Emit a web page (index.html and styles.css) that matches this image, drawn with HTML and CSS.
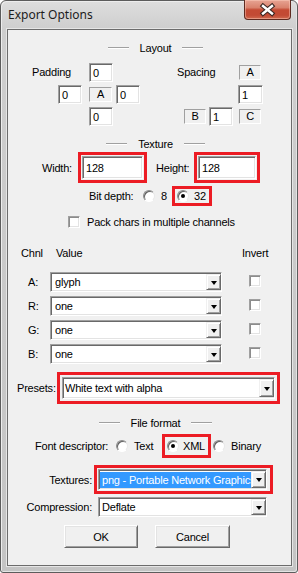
FILE: index.html
```html
<!DOCTYPE html>
<html lang="en">
<head>
    <meta charset="UTF-8">
    <meta name="viewport" content="width=device-width, initial-scale=1.0">
    <title>Export Options</title>
    <link rel="stylesheet" href="styles.css">
</head>
<body>
    <div class="window">
        <div class="titlebar">
            <span class="title">Export Options</span>
            <div class="close-btn">
                <svg width="45" height="18" viewBox="0 0 45 18">
                    <path d="M18 5 L27 12.5 M18 12.5 L27 5" stroke="#3a2622" stroke-width="4.6" stroke-linecap="square" fill="none"/>
                    <path d="M18 5 L27 12.5 M18 12.5 L27 5" stroke="#ffffff" stroke-width="2.4" stroke-linecap="square" fill="none"/>
                </svg>
            </div>
        </div>

        <div class="client">
            <!-- Layout -->
            <div class="group-head head-layout"><span class="rule"></span><span>Layout</span><span class="rule"></span></div>

            <div class="box-rows">
                <div class="box-row row-a">
                    <span class="lbl-padding">Padding</span>
                    <div class="edit">0</div>
                    <span class="lbl-spacing">Spacing</span>
                    <span class="static">A</span>
                </div>
                <div class="box-row row-b">
                    <div class="edit">0</div>
                    <span class="static static-mid">A</span>
                    <div class="edit edit-right">0</div>
                    <div class="edit edit-wide">1</div>
                </div>
                <div class="box-row row-c">
                    <div class="edit">0</div>
                    <span class="static static-b">B</span>
                    <div class="edit edit-b">1</div>
                    <span class="static static-c">C</span>
                </div>
            </div>

            <!-- Texture -->
            <div class="group-head head-texture"><span class="rule"></span><span>Texture</span><span class="rule"></span></div>

            <div class="size-row">
                <span class="lbl-width">Width:</span>
                <div class="mark mark-width"><div class="edit edit-size">128</div></div>
                <span class="lbl-height">Height:</span>
                <div class="mark mark-height"><div class="edit edit-size">128</div></div>
            </div>

            <div class="bit-row">
                <span class="lbl-bit">Bit depth:</span>
                <span class="radio"></span>
                <span class="opt-8">8</span>
                <div class="mark mark-32">
                    <span class="radio checked"></span>
                    <span class="opt-32">32</span>
                </div>
            </div>

            <div class="pack-row">
                <span class="check"></span>
                <span>Pack chars in multiple channels</span>
            </div>

            <!-- Channels -->
            <div class="chnl-head">
                <span class="col-chnl">Chnl</span>
                <span class="col-value">Value</span>
                <span>Invert</span>
            </div>

            <div class="chnl-rows">
                <div class="chnl-row">
                    <span class="chnl-lbl">A:</span>
                    <div class="combo combo-chnl"><span class="combo-text">glyph</span><span class="drop"><i class="arrow"></i></span></div>
                    <span class="check check-invert"></span>
                </div>
                <div class="chnl-row">
                    <span class="chnl-lbl">R:</span>
                    <div class="combo combo-chnl"><span class="combo-text">one</span><span class="drop"><i class="arrow"></i></span></div>
                    <span class="check check-invert"></span>
                </div>
                <div class="chnl-row">
                    <span class="chnl-lbl">G:</span>
                    <div class="combo combo-chnl"><span class="combo-text">one</span><span class="drop"><i class="arrow"></i></span></div>
                    <span class="check check-invert"></span>
                </div>
                <div class="chnl-row">
                    <span class="chnl-lbl">B:</span>
                    <div class="combo combo-chnl"><span class="combo-text">one</span><span class="drop"><i class="arrow"></i></span></div>
                    <span class="check check-invert"></span>
                </div>
            </div>

            <div class="presets-row">
                <span class="lbl-presets">Presets:</span>
                <div class="mark mark-presets">
                    <div class="combo combo-presets"><span class="combo-text">White text with alpha</span><span class="drop"><i class="arrow"></i></span></div>
                </div>
            </div>

            <!-- File format -->
            <div class="group-head head-format"><span class="rule"></span><span>File format</span><span class="rule"></span></div>

            <div class="desc-row">
                <span class="lbl-desc">Font descriptor:</span>
                <span class="radio"></span>
                <span class="opt-text">Text</span>
                <div class="mark mark-xml">
                    <span class="radio checked"></span>
                    <span class="opt-xml">XML</span>
                </div>
                <span class="radio radio-binary"></span>
                <span class="opt-binary">Binary</span>
            </div>

            <div class="tex-row">
                <span class="lbl-right">Textures:</span>
                <div class="mark mark-tex">
                    <div class="combo combo-file"><span class="combo-text"><span class="selected">png - Portable Network Graphics</span></span><span class="drop"><i class="arrow"></i></span></div>
                </div>
            </div>

            <div class="comp-row">
                <span class="lbl-right">Compression:</span>
                <div class="combo combo-file combo-comp"><span class="combo-text">Deflate</span><span class="drop"><i class="arrow"></i></span></div>
            </div>

            <div class="button-row">
                <div class="btn btn-ok">OK</div>
                <div class="btn btn-cancel">Cancel</div>
            </div>
        </div>
    </div>
</body>
</html>
```

FILE: styles.css
```css
body {
    margin: 0;
    background: #ffffff;
    font-family: "Liberation Sans", Arial, sans-serif;
    font-size: 11px;
    letter-spacing: -0.2px;
    color: #000;
}

.window {
    box-sizing: border-box;
    width: 298px;
    height: 573px;
    padding: 0 5px 6px 6px;
    border: 1px solid #5c5c5c;
    border-radius: 6px 6px 3px 3px;
    background: linear-gradient(to bottom, #dedede 0, #cecece 28px, #c4c4c4 100%);
    box-shadow: inset 1px 1px 0 #ededed, inset -1px -1px 0 #e4e4e4;
    display: flex;
    flex-direction: column;
}

.titlebar {
    height: 28px;
    display: flex;
    justify-content: space-between;
    align-items: flex-start;
}

.title {
    font-family: "Noto Sans", "Open Sans", sans-serif;
    font-size: 12px;
    letter-spacing: 0;
    color: #1c1c1c;
    margin: 5px 0 0 1px;
}

.close-btn {
    box-sizing: border-box;
    width: 47px;
    height: 20px;
    margin: -1px 1px 0 0;
    border: 1px solid #5e2a20;
    border-top: none;
    border-radius: 0 0 4px 4px;
    background: linear-gradient(to bottom, #e7a493 0, #d9826d 40%, #c44a33 52%, #c24a34 80%, #d06a4f 100%);
    box-shadow: inset 0 0 0 1px rgba(255, 210, 195, 0.45);
    display: flex;
    align-items: center;
    justify-content: center;
}

.client {
    flex: 1;
    background: #f0f0f0;
    border: 1px solid #6c6c6c;
    box-shadow: 0 0 0 1px #e6e6e6;
    display: flex;
    flex-direction: column;
}

/* group headers */
.group-head {
    height: 14px;
    padding-left: 12px;
    display: flex;
    justify-content: center;
    align-items: center;
}

.rule {
    width: 21px;
    height: 0;
    border-top: 1px solid #a0a0a0;
    border-bottom: 1px solid #ffffff;
}

.group-head .rule:first-child {
    margin-right: 11px;
}

.group-head .rule:last-child {
    margin-left: 11px;
}

.head-layout {
    margin-top: 11px;
}

.head-texture {
    margin-top: 11px;
}

.head-format {
    margin-top: 12px;
}

/* sunken edit box */
.edit {
    box-sizing: border-box;
    width: 24px;
    height: 19px;
    padding: 2px 0 0 3px;
    background: #fff;
    border: 1px solid;
    border-color: #a0a0a0 #ffffff #ffffff #a0a0a0;
    box-shadow: inset 1px 1px 0 #696969, inset -1px -1px 0 #e3e3e3;
    line-height: 14px;
}

.static {
    box-sizing: border-box;
    width: 22px;
    height: 15px;
    border: 1px solid;
    border-color: #a0a0a0 #ffffff #ffffff #a0a0a0;
    text-align: center;
    line-height: 13px;
}

/* layout boxes */
.box-rows {
    margin-top: 8px;
    display: flex;
    flex-direction: column;
    gap: 3px;
}

.box-row {
    height: 19px;
    display: flex;
    align-items: center;
}

.row-a {
    padding-left: 24px;
}

.row-b {
    padding-left: 50px;
}

.row-c {
    padding-left: 81px;
}

.lbl-padding {
    width: 57px;
    margin-top: -2px;
}

.lbl-spacing {
    width: 62px;
    margin-left: 64px;
    margin-top: -2px;
}

.static-mid {
    width: 23px;
    margin-left: 7px;
}

.edit-right {
    margin-left: 4px;
}

.edit-wide {
    width: 25px;
    margin-left: 98px;
}

.static-b {
    margin-left: 71px;
}

.edit-b {
    margin-left: 3px;
}

.static-c {
    margin-left: 6px;
}

/* red markers */
.mark {
    box-sizing: border-box;
    border: 3px solid #ec1c24;
    display: flex;
    align-items: center;
}

/* texture size */
.size-row {
    margin-top: 1px;
    height: 31px;
    padding-left: 34px;
    display: flex;
    align-items: center;
}

.lbl-width {
    width: 36px;
}

.lbl-height {
    width: 38px;
    margin-left: 9px;
}

.mark-width {
    width: 69px;
    height: 31px;
    padding: 1px;
}

.mark-height {
    width: 66px;
    height: 31px;
    padding: 1px;
}

.edit-size {
    width: 100%;
    height: 23px;
    padding-top: 4px;
}

/* radios and checks */
.radio {
    box-sizing: border-box;
    width: 12px;
    height: 12px;
    border-radius: 50%;
    background: #fff;
    border: 1px solid;
    border-color: #8a8a8a #e8e8e8 #ffffff #8a8a8a;
    box-shadow: inset 1px 1px 0 #5f5f5f;
    display: flex;
    align-items: center;
    justify-content: center;
}

.radio.checked::after {
    content: "";
    width: 4px;
    height: 4px;
    border-radius: 50%;
    background: #000;
}

.check {
    box-sizing: border-box;
    width: 12px;
    height: 12px;
    background: #fff;
    border: 1px solid;
    border-color: #a0a0a0 #ffffff #ffffff #a0a0a0;
    box-shadow: inset 1px 1px 0 #8c8c8c, inset -1px -1px 0 #e3e3e3;
}

.bit-row {
    margin-top: 3px;
    height: 20px;
    padding-left: 81px;
    display: flex;
    align-items: center;
}

.lbl-bit {
    width: 54px;
}

.opt-8 {
    width: 11px;
    margin-left: 6px;
}

.mark-32 {
    width: 40px;
    height: 20px;
    padding: 0 2px;
}

.opt-32 {
    margin-left: 5px;
}

.pack-row {
    margin-top: 9px;
    height: 14px;
    padding-left: 60px;
    display: flex;
    align-items: center;
    gap: 7px;
}

/* channels */
.chnl-head {
    margin-top: 17px;
    height: 14px;
    padding-left: 13px;
    display: flex;
    align-items: center;
}

.col-chnl {
    width: 35px;
}

.col-value {
    width: 186px;
}

.chnl-rows {
    margin-top: 12px;
    display: flex;
    flex-direction: column;
    gap: 4px;
}

.chnl-row {
    height: 20px;
    padding-left: 20px;
    display: flex;
    align-items: center;
}

.chnl-lbl {
    width: 22px;
}

.check-invert {
    margin-left: 27px;
    margin-top: -3px;
}

/* combo boxes */
.combo {
    box-sizing: border-box;
    height: 20px;
    background: #fff;
    border: 1px solid;
    border-color: #a0a0a0 #ffffff #ffffff #a0a0a0;
    box-shadow: inset 1px 1px 0 #696969, inset -1px -1px 0 #e3e3e3;
    padding: 1px 0 1px 1px;
    display: flex;
}

.combo-chnl {
    width: 172px;
}

.combo-text {
    flex: 1;
    padding-left: 3px;
    display: flex;
    align-items: center;
    overflow: hidden;
    white-space: nowrap;
}

.drop {
    box-sizing: border-box;
    width: 15px;
    background: #f0f0f0;
    border: 1px solid;
    border-color: #f0f0f0 #696969 #696969 #f0f0f0;
    box-shadow: inset 1px 1px 0 #ffffff, inset -1px -1px 0 #a0a0a0;
    display: flex;
    align-items: center;
    justify-content: center;
}

.arrow {
    width: 0;
    height: 0;
    margin-top: 1px;
    border-top: 4px solid #000;
    border-left: 3.5px solid transparent;
    border-right: 3.5px solid transparent;
}

.presets-row {
    margin-top: 8px;
    height: 32px;
    padding-left: 9px;
    display: flex;
    align-items: center;
}

.lbl-presets {
    width: 40px;
}

.mark-presets {
    width: 223px;
    height: 32px;
    padding: 2px;
}

.combo-presets {
    width: 215px;
    height: 22px;
}

.combo-presets .combo-text {
    padding-left: 1px;
}

/* file format */
.desc-row {
    margin-top: 4px;
    height: 24px;
    padding-left: 27px;
    display: flex;
    align-items: center;
}

.lbl-desc {
    width: 81px;
}

.opt-text {
    width: 28px;
    margin-left: 6px;
}

.mark-xml {
    width: 49px;
    height: 24px;
    padding: 0 2px;
}

.opt-xml {
    margin-left: 4px;
}

.radio-binary {
    margin-left: 2px;
}

.opt-binary {
    margin-left: 6px;
}

.tex-row {
    margin-top: 7px;
    height: 29px;
    display: flex;
    align-items: center;
}

.lbl-right {
    width: 84px;
    text-align: right;
}

.mark-tex {
    width: 179px;
    height: 29px;
    margin-left: 2px;
    padding: 1px 3px 1px 1px;
}

.combo-file {
    width: 169px;
    height: 21px;
}

.combo-file .combo-text {
    padding-left: 0;
}

.selected {
    display: block;
    width: 100%;
    height: 16px;
    line-height: 16px;
    padding-left: 2px;
    background: #3399ff;
    color: #fff;
    overflow: hidden;
    white-space: nowrap;
}

.comp-row {
    margin-top: 3px;
    height: 20px;
    display: flex;
    align-items: center;
}

.combo-comp {
    height: 20px;
    margin-left: 6px;
}

.combo-comp .combo-text {
    padding-left: 2px;
}

/* buttons */
.button-row {
    margin-top: 8px;
    height: 23px;
    padding-left: 56px;
    display: flex;
}

.btn {
    box-sizing: border-box;
    height: 23px;
    background: #f0f0f0;
    border: 1px solid;
    border-color: #ffffff #696969 #696969 #ffffff;
    box-shadow: inset 1px 1px 0 #e3e3e3, inset -1px -1px 0 #a0a0a0;
    display: flex;
    align-items: center;
    justify-content: center;
}

.btn-ok {
    width: 74px;
}

.btn-cancel {
    width: 75px;
    margin-left: 17px;
}
```
